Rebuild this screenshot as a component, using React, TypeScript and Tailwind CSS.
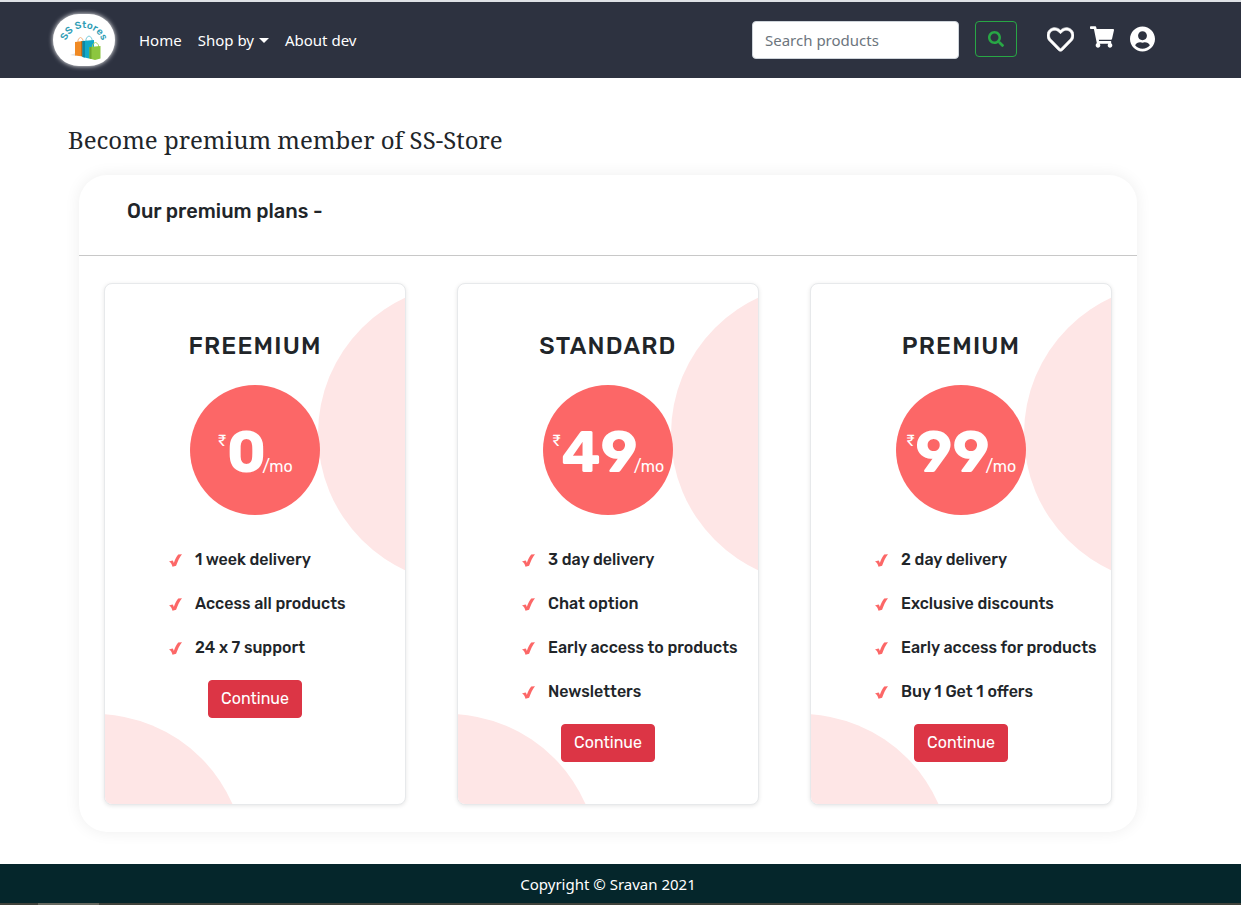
import { FaRegHeart, FaSearch, FaShoppingCart, FaUserCircle } from "react-icons/fa";

type Plan = { name: string; price: string; features: string[] };

const plans: Plan[] = [
  {
    name: "FREEMIUM",
    price: "0",
    features: ["1 week delivery", "Access all products", "24 x 7 support"],
  },
  {
    name: "STANDARD",
    price: "49",
    features: ["3 day delivery", "Chat option", "Early access to products", "Newsletters"],
  },
  {
    name: "PREMIUM",
    price: "99",
    features: ["2 day delivery", "Exclusive discounts", "Early access for products", "Buy 1 Get 1 offers"],
  },
];

function Logo() {
  return (
    <svg viewBox="0 0 62 52" className="h-full w-full overflow-visible" role="img" aria-label="SS Stores">
      <path id="logo-arc" d="M12 33 A19 19 0 1 1 50 33" fill="none" />
      <text fill="#2e9db5" fontFamily="Rubik, sans-serif" fontWeight="500" fontSize="10" textAnchor="middle">
        <textPath href="#logo-arc" startOffset="50%">SS Stores</textPath>
      </text>
      <path d="M17 41 L23 39 V42 Z" fill="#e4e4e4" />
      <path d="M25 29 V26 Q27.500 21 30 26 V29" fill="none" stroke="#f3b078" strokeWidth="0.900" />
      <path d="M33 27 V25 Q36 19 39 25 V27" fill="none" stroke="#6cc6d8" strokeWidth="0.900" />
      <path d="M22 28 L30 27 V42.500 L22 41.500 Z" fill="#f08a24" />
      <path d="M28 27.300 L30 27 V42.500 L28 42 Z" fill="#c96a16" />
      <path d="M29.500 27 L41 26 V43 L36 44.500 L29.500 43 Z" fill="#12a9c9" />
      <path d="M29.500 27 H32 V43.500 L29.500 43 Z" fill="#0d87a5" />
      <path d="M39.500 33 V31 Q42.500 26 45.500 31 V33" fill="none" stroke="#a5cf60" strokeWidth="0.900" />
      <path d="M36.500 33 L47.500 32 V44.500 L42 46 L36.500 44.500 Z" fill="#8cc63f" />
      <path d="M36.500 33 H38.500 V45 L36.500 44.500 Z" fill="#6fa52d" />
    </svg>
  );
}

function Tick() {
  return (
    <svg viewBox="0 0 13 13" className="mt-px h-[13px] w-[13px] shrink-0" aria-hidden="true">
      <path d="M0 7.600 L3.400 6.600 C4.200 7 4.500 7.800 4.800 8.900 C6 5.500 7.400 2.600 9.200 0.500 L13 0.200 C10.500 3.400 8.600 7.400 7.100 11.800 L3.500 12.800 C2.900 10.800 2.300 8.900 0 7.600 Z" fill="#fc6767" />
    </svg>
  );
}

function PlanCard({ plan }: { plan: Plan }) {
  return (
    <article className="relative overflow-hidden rounded-lg border border-[#e7e9eb] bg-white pt-[47px] pb-[42px] shadow-[0_1px_4px_rgba(0,0,0,0.1)]">
      <div className="absolute top-0 left-[213px] h-[300px] w-[300px] rounded-full bg-[#fee6e6]" />
      <div className="absolute top-[430px] left-[-160px] h-[300px] w-[300px] rounded-full bg-[#fee6e6]" />
      <div className="relative flex flex-col items-center">
        <h3 className="text-2xl leading-[30px] font-medium tracking-wider">{plan.name}</h3>
        <div className="mt-6 flex h-[130px] w-[130px] items-center justify-center rounded-full bg-[#fc6767] pt-[5px] text-white">
          <p className="flex items-baseline whitespace-nowrap">
            <span className="self-start pt-[6px] text-base leading-6">₹</span>
            <span className="text-[58px] leading-[60px] font-bold">{plan.price}</span>
            <span className="-ml-1 text-base">/mo</span>
          </p>
        </div>
        <ul className="mt-[23px] w-full pl-16">
          {plan.features.map((feature) => (
            <li key={feature} className="flex h-11 items-center gap-[13px] text-base font-medium whitespace-nowrap">
              <Tick />
              {feature}
            </li>
          ))}
        </ul>
        <button type="button" className="mt-[10px] h-[38px] rounded border border-[#dc3545] bg-[#dc3545] px-3 text-base text-white">
          Continue
        </button>
      </div>
    </article>
  );
}

export default function App() {
  return (
    <div className="flex min-h-screen flex-col bg-white font-['Rubik','Roboto',sans-serif] text-[#212529]">
      <header className="flex h-[78px] items-center justify-between border-t-2 border-[#dee2e6] bg-[#2d3240] pr-[86px] pl-[53px] font-['Segoe_UI','Noto_Sans',sans-serif] text-[15px] text-white">
        <nav className="flex items-center gap-4">
          <a href="#" className="mr-2 h-[52px] w-[62px] rounded-[26px] bg-white shadow-[0_0_5px_#ffffff]">
            <Logo />
          </a>
          <a href="#">Home</a>
          <button type="button" className="flex items-center gap-[5px]">
            Shop by
            <svg viewBox="0 0 10 5" className="h-[5px] w-[10px]" aria-hidden="true">
              <path d="M0 0 H10 L5 5 Z" fill="currentColor" />
            </svg>
          </button>
          <a href="#">About dev</a>
        </nav>
        <div className="flex items-center">
          <form className="flex items-start gap-4">
            <input
              type="search"
              aria-label="Search products"
              placeholder="Search products"
              className="h-[38px] w-[207px] rounded border border-[#ced4da] bg-white px-3 text-[15px] text-[#495057] placeholder:text-[#6c757d]"
            />
            <button type="button" aria-label="Search" className="flex h-9 w-[42px] items-center justify-center rounded border border-[#28a745] text-[#28a745]">
              <FaSearch className="h-4 w-4" />
            </button>
          </form>
          <div className="ml-[30px] flex items-start gap-4 pb-[2px]">
            <a href="#" aria-label="Wishlist">
              <FaRegHeart className="h-[27px] w-[27px] stroke-[12]" />
            </a>
            <a href="#" aria-label="Cart">
              <FaShoppingCart className="h-[22px] w-6" />
            </a>
            <a href="#" aria-label="Account">
              <FaUserCircle className="h-[26px] w-[25px]" />
            </a>
          </div>
        </div>
      </header>

      <main className="flex-1 pr-[104px] pl-[79px]">
        <h1 className="-ml-[11px] pt-11 pb-[17px] font-['Noto_Serif','DejaVu_Serif',serif] text-2xl leading-9">
          Become premium member of SS-Store
        </h1>
        <section className="rounded-[28px] bg-white shadow-[0_0_16px_rgba(0,0,0,0.07)]">
          <h2 className="border-b border-[#c8c8c8] px-12 pt-[22px] pb-[30px] text-xl leading-7 font-medium">
            Our premium plans -
          </h2>
          <div className="grid grid-cols-3 gap-[51px] px-[25px] py-[27px]">
            {plans.map((plan) => (
              <PlanCard key={plan.name} plan={plan} />
            ))}
          </div>
        </section>
      </main>

      <footer className="mt-8 bg-[#05262b] font-['Segoe_UI','Noto_Sans',sans-serif] text-[15px] text-white">
        <p className="pt-[9px] pr-[25px] pb-[7px] text-center leading-[23px]">Copyright © Sravan 2021</p>
        <div className="h-[2px] bg-[#40423b] pl-[38px]">
          <div className="h-full w-[61px] bg-[#66685f]" />
        </div>
      </footer>
    </div>
  );
}
